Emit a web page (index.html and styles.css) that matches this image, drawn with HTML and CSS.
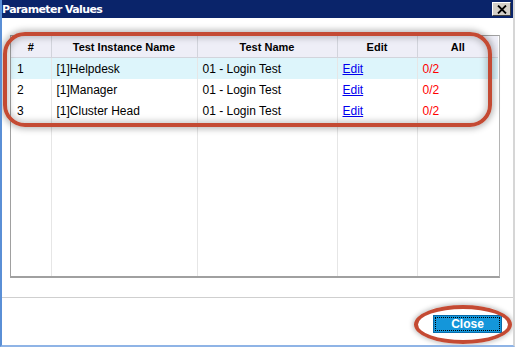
FILE: index.html
```html
<!DOCTYPE html>
<html>
  <head>
    <meta charset="utf-8" />
    <title>Parameter Values</title>
    <link rel="stylesheet" href="styles.css">
  </head>
  <body>
    <div class="window">
      <div class="titlebar">
        <span class="title">Parameter Values</span>
        <span class="xbtn">
          <svg width="10" height="9" viewBox="0 0 10 9">
            <path d="M1 0.5 L9 8.5 M9 0.5 L1 8.5" stroke="#000" stroke-width="1.8" />
          </svg>
        </span>
      </div>
      <div class="content">
        <div class="grid">
          <table>
            <colgroup>
              <col class="c-num" />
              <col class="c-inst" />
              <col class="c-test" />
              <col class="c-edit" />
              <col class="c-all" />
            </colgroup>
            <thead>
              <tr>
                <th>#</th>
                <th>Test Instance Name</th>
                <th>Test Name</th>
                <th>Edit</th>
                <th>All</th>
              </tr>
            </thead>
            <tbody>
              <tr class="sel">
                <td>1</td>
                <td>[1]Helpdesk</td>
                <td>01 - Login Test</td>
                <td><a href="#">Edit</a></td>
                <td class="count">0/2</td>
              </tr>
              <tr>
                <td>2</td>
                <td>[1]Manager</td>
                <td>01 - Login Test</td>
                <td><a href="#">Edit</a></td>
                <td class="count">0/2</td>
              </tr>
              <tr>
                <td>3</td>
                <td>[1]Cluster Head</td>
                <td>01 - Login Test</td>
                <td><a href="#">Edit</a></td>
                <td class="count">0/2</td>
              </tr>
              <tr class="filler">
                <td></td><td></td><td></td><td></td><td></td>
              </tr>
            </tbody>
          </table>
        </div>
      </div>
      <div class="footer">
        <button class="close">Close</button>
      </div>
      <div class="mark-rows"></div>
      <div class="mark-close"></div>
    </div>
  </body>
</html>
```

FILE: styles.css
```css
body {
  margin: 0;
  background: #ffffff;
  font-family: "Liberation Sans", Arial, sans-serif;
  font-size: 12px;
}
.window {
  position: relative;
  width: 511px;
  height: 345px;
  border-left: 2px solid #5a8fd6;
  border-right: 2px solid #d6d6d6;
  border-bottom: 2px solid #8fb4e6;
  background: #ffffff;
  overflow: hidden;
}
.titlebar {
  height: 18px;
  background: #0a246a;
  display: flex;
  align-items: center;
  justify-content: space-between;
  padding: 0 2px 0 0;
}
.title {
  color: #ffffff;
  font-family: "DejaVu Sans", sans-serif;
  font-weight: bold;
  font-size: 11px;
  letter-spacing: -0.6px;
}
.xbtn {
  display: flex;
  align-items: center;
  justify-content: center;
  width: 17px;
  height: 12px;
  background: #d4d0c8;
  border: 1px solid;
  border-color: #ffffff #404040 #404040 #ffffff;
}
.content {
  padding: 17px 0 0 8px;
  height: 262px;
  border-bottom: 1px solid #cfcfcf;
}
.grid {
  width: 488px;
  height: 240px;
  border: 1px solid #a0a0a0;
  border-right-color: #b4b4b4;
  border-bottom-width: 2px;
}
table {
  width: 487px;
  height: 240px;
  border-collapse: collapse;
  table-layout: fixed;
}
.c-num { width: 40px; }
.c-inst { width: 146px; }
.c-test { width: 140px; }
.c-edit { width: 80px; }
.c-all { width: 81px; }
th {
  height: 21px;
  padding: 0;
  background: #eeeef7;
  border-left: 1px solid #d2d4dc;
  border-bottom: 1px solid #d2d4dc;
  font-size: 11px;
  font-weight: bold;
  text-align: center;
}
th:first-child, td:first-child {
  border-left: 0;
}
td {
  height: 21px;
  padding: 0 0 0 5px;
  border-left: 1px solid #e6e6e6;
  white-space: nowrap;
}
td:first-child {
  padding-left: 6px;
}
tr.sel td {
  background: #ddf5fb;
}
tr.filler td {
  height: auto;
}
a {
  color: #0000ee;
}
.count {
  color: #ff0000;
}
.footer {
  display: flex;
  justify-content: flex-end;
  padding: 17px 11px 0 0;
}
.close {
  width: 69px;
  height: 18px;
  background: #1496da;
  border: 1px solid #0a6aa8;
  outline: 1px dotted #000000;
  outline-offset: -3px;
  color: #ffffff;
  font-family: "Liberation Sans", sans-serif;
  font-weight: bold;
  font-size: 12px;
  padding: 0;
}
.mark-rows {
  position: absolute;
  left: 1px;
  top: 32px;
  width: 481px;
  height: 87px;
  border: 4px solid #c44a33;
  border-radius: 22px;
  box-shadow: 0 0 6px 2px rgba(0, 0, 0, 0.28), inset 0 0 6px 2px rgba(0, 0, 0, 0.22);
}
.mark-close {
  position: absolute;
  left: 412px;
  top: 305px;
  width: 90px;
  height: 31px;
  border: 4px solid #c44a33;
  border-radius: 50%;
  box-shadow: 0 0 5px 1px rgba(0, 0, 0, 0.28);
}
```
